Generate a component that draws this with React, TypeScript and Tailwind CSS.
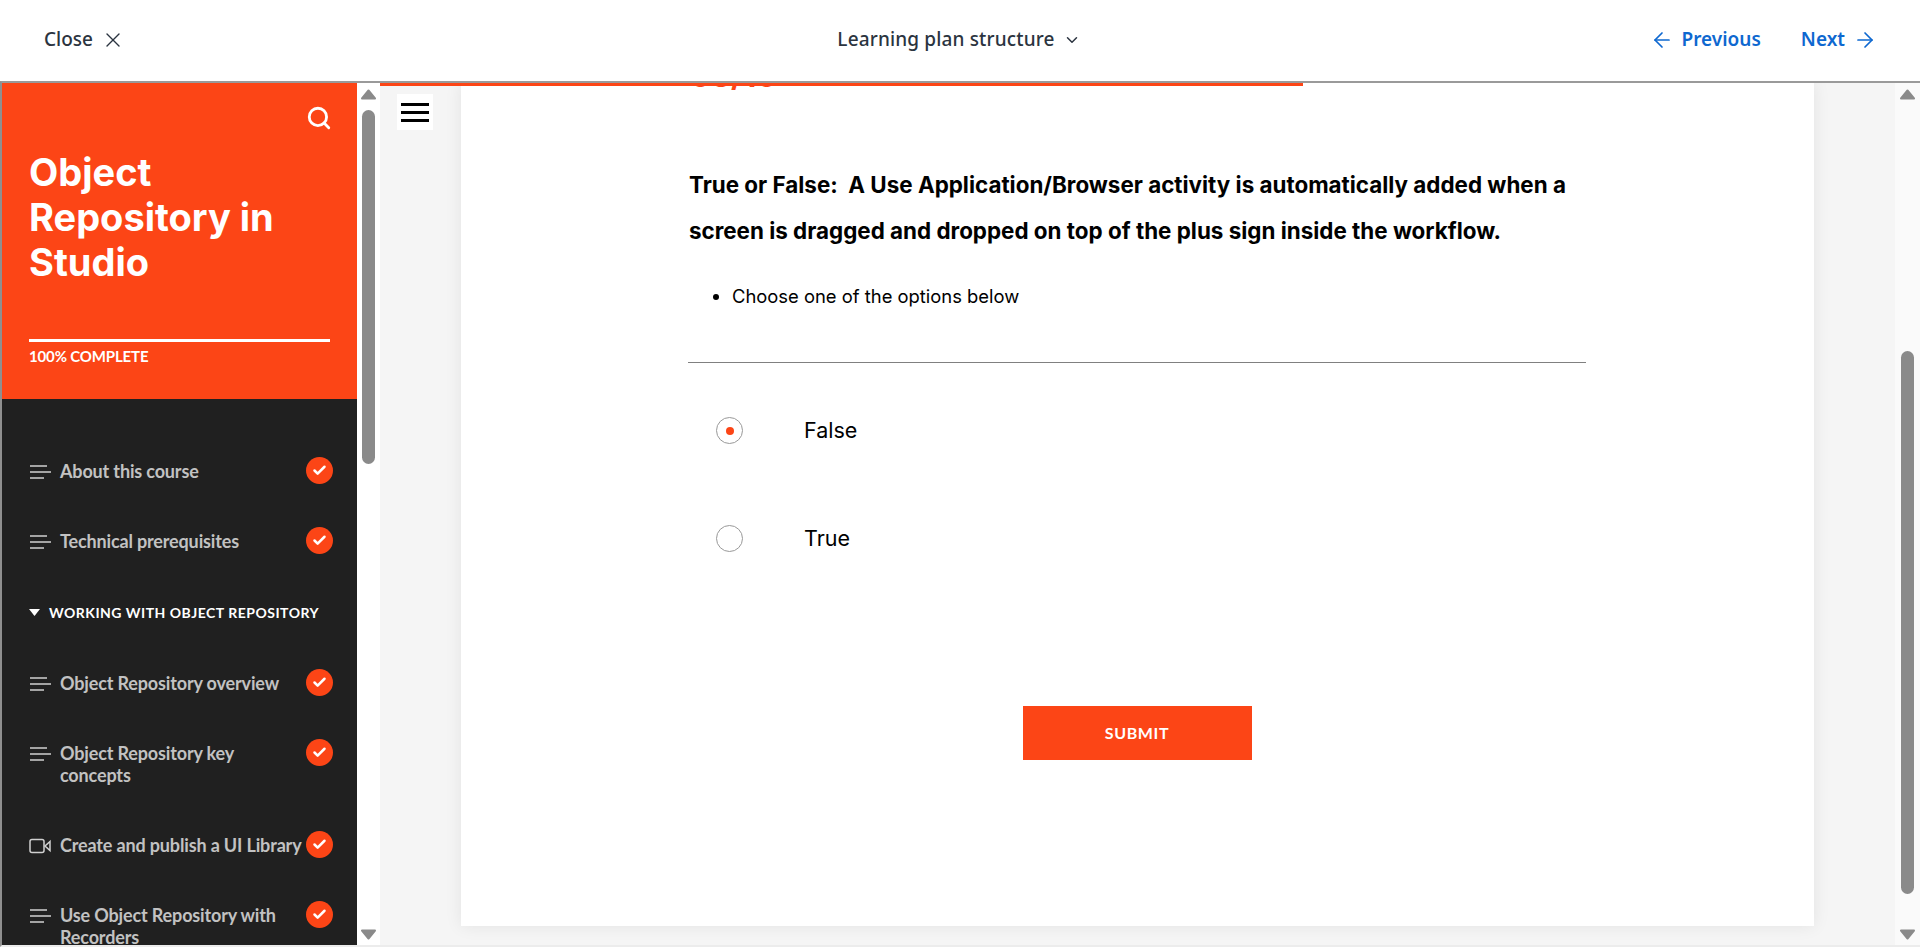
import React from "react";
import { X, ChevronDown, ArrowLeft, ArrowRight, Search, Check } from "lucide-react";

function Lines() {
  return (
    <svg width="22" height="16" viewBox="0 0 22 16" className="shrink-0 mt-[4px]" fill="none" stroke="#d0d0d0" strokeWidth="1.6">
      <path d="M1 2h17M1 8h21M1 14h14" />
    </svg>
  );
}
function Video() {
  return (
    <svg width="22" height="16" viewBox="0 0 22 16" className="shrink-0 mt-[4px]" fill="none" stroke="#d0d0d0" strokeWidth="1.5">
      <rect x="1" y="1.5" width="14" height="13" rx="2" />
      <path d="M21 3.5 16 8l5 4.5z" />
    </svg>
  );
}
function Done() {
  return (
    <span className="shrink-0 w-[27px] h-[27px] rounded-full bg-[#fc4516] flex items-center justify-center">
      <Check size={15} strokeWidth={4} color="#fff" />
    </span>
  );
}
function Row({ text, video }: { text: string; video?: boolean }) {
  return (
    <div className="flex items-start py-[24px] pl-[27px] pr-[24px]">
      {video ? <Video /> : <Lines />}
      <span className="ml-[9px] flex-1 text-[18px] leading-[22px] font-bold tracking-[-0.15px] text-[#c2c2c2] whitespace-pre-line">{text}</span>
      <span className="-my-[3px]"><Done /></span>
    </div>
  );
}
function Arrow({ up }: { up?: boolean }) {
  return (
    <svg width="15" height="11" viewBox="0 0 15 11" fill="#8a8a8a" stroke="#8a8a8a" strokeWidth="2" strokeLinejoin="round">
      {up ? <path d="M7.5 1.5 14 9.5H1z" /> : <path d="M1 1.5h13L7.5 9.5z" />}
    </svg>
  );
}

export default function App() {
  return (
    <div className="h-[947px] w-[1920px] overflow-hidden bg-white flex flex-col font-['Inter',sans-serif]">
      <header className="h-[81px] shrink-0 flex items-center justify-between pb-[2px] pl-[44px] pr-[43px] font-['Noto_Sans',sans-serif] text-[19px] font-medium">
        <div className="flex items-center gap-[8px] text-[#2b3440] w-[300px]">
          <span>Close</span>
          <X size={24} strokeWidth={1.4} />
        </div>
        <div className="flex items-center gap-[8px] text-[#2b3440] mr-[3px]">
          <span className="tracking-[0.15px]">Learning plan structure</span>
          <ChevronDown size={18} strokeWidth={2} />
        </div>
        <div className="flex items-center justify-end text-[#0e68d0] w-[300px] font-semibold">
          <ArrowLeft size={24} strokeWidth={1.7} />
          <span className="ml-[8px]">Previous</span>
          <span className="ml-[40px]">Next</span>
          <ArrowRight size={24} strokeWidth={1.7} className="ml-[8px]" />
        </div>
      </header>

      <div className="flex-1 min-h-0 flex border-t-2 border-b-2 border-l-2 border-t-[#9a9a9a] border-b-[#ececec] border-l-[#8f8f8f]">
        <aside className="w-[355px] shrink-0 bg-[#202020] overflow-hidden font-['Lato',sans-serif]">
          <div className="h-[316px] bg-[#fc4516] flex flex-col pl-[27px] pr-[27px] text-white">
            <div className="flex justify-end pt-[22px] h-[55px]">
              <Search size={26} strokeWidth={2.6} className="-mr-[2px]" />
            </div>
            <h1 className="mt-[12px] font-['Inter',sans-serif] font-bold text-[38px] leading-[45px] w-[280px]">Object Repository in Studio</h1>
            <div className="mt-[54px] h-[3px] bg-white" />
            <div className="mt-[4px] text-[15px] leading-[20px] font-bold tracking-[-0.15px]">100% COMPLETE</div>
          </div>
          <div className="pt-[37px]">
            <Row text="About this course" />
            <Row text="Technical prerequisites" />
            <div className="flex items-center pl-[27px] box-content py-[25px] h-[22px] text-white text-[14px] font-bold tracking-[0.5px]">
              <svg width="11" height="7" viewBox="0 0 11 7" fill="#fff" className="mr-[9px] shrink-0"><path d="M0 0h11L5.5 7z" /></svg>
              WORKING WITH OBJECT REPOSITORY
            </div>
            <Row text="Object Repository overview" />
            <Row text={"Object Repository key\nconcepts"} />
            <Row text="Create and publish a UI Library" video />
            <Row text={"Use Object Repository with\nRecorders"} />
          </div>
        </aside>

        <div className="w-[23px] shrink-0 bg-white flex flex-col items-center pt-[6px] pb-[5px]">
          <Arrow up />
          <div className="mt-[10px] w-[13px] h-[354px] rounded-full bg-[#8a8a8a]" />
          <div className="mt-auto"><Arrow /></div>
        </div>

        <main className="relative flex-1 min-w-0 bg-[#f5f5f5] overflow-hidden">
          <div className="absolute top-0 left-0 w-[923px] h-[3px] bg-[#fc4516] z-10" />
          <button className="absolute top-[11px] left-[17px] w-[36px] h-[36px] bg-white flex flex-col justify-center items-center gap-[5px] z-10">
            <span className="block w-[28px] h-[3px] bg-black" />
            <span className="block w-[28px] h-[3px] bg-black" />
            <span className="block w-[28px] h-[3px] bg-black" />
          </button>
          <div className="ml-[81px] mr-[81px] h-[843px] flow-root bg-white shadow-[0_0_16px_rgba(0,0,0,0.08)] pl-[227px] pr-[228px]">
            <div className="-mt-[22px] h-[30px] pl-[2px] text-[31px] leading-[30px] font-bold text-[#fc4516]">03/10</div>
            <h2 className="mt-[71px] pl-[1px] text-[22.4px] leading-[46px] font-bold text-black whitespace-pre w-[900px]">
              {"True or False:  A Use Application/Browser activity is automatically added when a\nscreen is dragged and dropped on top of the plus sign inside the workflow."}
            </h2>
            <ul className="mt-[28px] list-disc pl-[44px] text-[18.4px] leading-[28px] text-black">
              <li>Choose one of the options below</li>
            </ul>
            <div className="mt-[52px] h-[1px] bg-[#808080]" />
            <div className="mt-[54px] flex items-center h-[27px] pl-[28px]">
              <span className="w-[27px] h-[27px] rounded-full border border-[#999999] flex items-center justify-center">
                <span className="w-[8px] h-[8px] rounded-full bg-[#fc4516]" />
              </span>
              <span className="ml-[61px] text-[21.5px] text-black">False</span>
            </div>
            <div className="mt-[81px] flex items-center h-[27px] pl-[28px]">
              <span className="w-[27px] h-[27px] rounded-full border border-[#999999]" />
              <span className="ml-[61px] text-[21.5px] text-black">True</span>
            </div>
            <div className="mt-[154px] flex justify-center">
              <button className="w-[229px] h-[54px] bg-[#fc4516] text-white font-['Lato',sans-serif] font-bold text-[16px] tracking-[0.6px]">SUBMIT</button>
            </div>
          </div>
        </main>

        <div className="w-[25px] shrink-0 bg-[#fafafa] flex flex-col items-center pt-[6px] pb-[5px]">
          <Arrow up />
          <div className="mt-[251px] w-[13px] h-[543px] rounded-full bg-[#8a8a8a]" />
          <div className="mt-auto"><Arrow /></div>
        </div>
      </div>
    </div>
  );
}
